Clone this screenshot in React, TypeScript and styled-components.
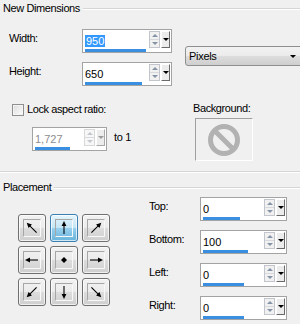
import React from 'react';
import styled, { createGlobalStyle, css } from 'styled-components';

const GlobalStyle = createGlobalStyle`
	html, body {
		margin: 0;
		padding: 0;
		background: #f0f0f0;
	}
	body {
		font-family: "Liberation Sans", Arial, sans-serif;
		font-size: 11px;
		color: #000;
	}
`;

type Dir = 'nw' | 'n' | 'ne' | 'w' | 'c' | 'e' | 'sw' | 's' | 'se';

const ROTATE: Record<Dir, number> = { n: 0, ne: 45, e: 90, se: 135, s: 180, sw: 225, w: 270, nw: 315, c: 0 };

const ArrowIcon: React.FC<{ dir: Dir }> = ({ dir }) => {
	if (dir === 'c') {
		return (
			<svg width="16" height="16" viewBox="0 0 16 16">
				<polygon points="8,5 11,8 8,11 5,8" fill="#000" />
			</svg>
		);
	}
	const diagonal = dir.length === 2;
	const len = diagonal ? 6.5 : 6;
	return (
		<svg width="16" height="16" viewBox="0 0 16 16">
			<g transform={`rotate(${ROTATE[dir]} 8 8)`}>
				<line x1="8" y1={8 - len + 2} x2="8" y2={8 + len} stroke="#000" strokeWidth="1.1" />
				<polygon points={`8,${8 - len - 1} 5.6,${8 - len + 4} 10.4,${8 - len + 4}`} fill="#000" />
			</g>
		</svg>
	);
};

const NoSign: React.FC = () => (
	<svg width="34" height="34" viewBox="0 0 34 34">
		<circle cx="17" cy="17" r="13.5" fill="none" stroke="#b2b2b2" strokeWidth="5" />
		<line x1="7.5" y1="7.5" x2="26.5" y2="26.5" stroke="#b2b2b2" strokeWidth="5" />
	</svg>
);

const SpinField: React.FC<{
	value: string;
	fill: number;
	width: number;
	selected?: boolean;
	disabled?: boolean;
}> = ({ value, fill, width, selected, disabled }) => (
	<Field $width={width}>
		<FieldTop>
			<Value $disabled={disabled}>{selected ? <Selection>{value}</Selection> : value}</Value>
			<Spinner>
				<UpDown $disabled={disabled}>
					<Half>
						<TriUp $disabled={disabled} />
					</Half>
					<Half $lower>
						<TriDown $disabled={disabled} />
					</Half>
				</UpDown>
				<DropBtn $disabled={disabled}>
					<TriDrop $disabled={disabled} />
				</DropBtn>
			</Spinner>
		</FieldTop>
		<Track>
			<Bar style={{ width: fill }} />
		</Track>
	</Field>
);

const PLACEMENT: Dir[] = ['nw', 'n', 'ne', 'w', 'c', 'e', 'sw', 's', 'se'];

const App: React.FC = () => {
	return (
		<>
			<GlobalStyle />
			<Page>
				<GroupHeader>
					<GroupTitle>New Dimensions</GroupTitle>
					<GroupRule />
				</GroupHeader>

				<DimRow>
					<FieldGrid $labelWidth={73} $fieldWidth={90}>
						<FieldLabel>Width:</FieldLabel>
						<SpinField value="950" fill={61} width={90} selected />
						<FieldLabel>Height:</FieldLabel>
						<SpinField value="650" fill={57} width={90} />
					</FieldGrid>
					<UnitSelect>
						<span>Pixels</span>
						<TriDrop />
					</UnitSelect>
				</DimRow>

				<OptionRow>
					<OptionLeft>
						<LockRow>
							<CheckBox />
							<LabelText>Lock aspect ratio:</LabelText>
						</LockRow>
						<RatioRow>
							<SpinField value="1,727" fill={35} width={75} disabled />
							<RatioText>to 1</RatioText>
						</RatioRow>
					</OptionLeft>
					<OptionRight>
						<LabelText>Background:</LabelText>
						<BgSwatch>
							<NoSign />
						</BgSwatch>
					</OptionRight>
				</OptionRow>

				<Separator />

				<GroupHeader>
					<GroupTitle>Placement</GroupTitle>
					<GroupRule />
				</GroupHeader>

				<PlacementRow>
					<PosGrid>
						{PLACEMENT.map((d) => (
							<PosButton key={d} $active={d === 'n'}>
								<PosFrame>
									<ArrowIcon dir={d} />
								</PosFrame>
							</PosButton>
						))}
					</PosGrid>
					<FieldGrid $labelWidth={51} $fieldWidth={87}>
						<FieldLabel>Top:</FieldLabel>
						<SpinField value="0" fill={37} width={87} />
						<FieldLabel>Bottom:</FieldLabel>
						<SpinField value="100" fill={45} width={87} />
						<FieldLabel>Left:</FieldLabel>
						<SpinField value="0" fill={41} width={87} />
						<FieldLabel>Right:</FieldLabel>
						<SpinField value="0" fill={41} width={87} />
					</FieldGrid>
				</PlacementRow>
			</Page>
		</>
	);
};

const Page = styled.div`
	width: 300px;
	height: 324px;
	overflow: hidden;
	box-sizing: border-box;
	padding-top: 2px;
`;

const GroupHeader = styled.div`
	display: flex;
	align-items: center;
	height: 13px;
	line-height: 13px;
	padding-left: 3px;
`;

const GroupTitle = styled.span`
	letter-spacing: -0.4px;
	margin-right: 3px;
	white-space: nowrap;
`;

const GroupRule = styled.div`
	flex: 1;
	height: 0;
	border-top: 1px solid #d5d5d5;
	border-bottom: 1px solid #ffffff;
`;

const Separator = styled.div`
	margin-top: 10px;
	height: 0;
	border-top: 1px solid #d5d5d5;
	border-bottom: 1px solid #ffffff;
	margin-bottom: 8px;
`;

const DimRow = styled.div`
	display: flex;
	align-items: center;
	margin-top: 14px;
	padding-left: 9px;
`;

const FieldGrid = styled.div<{ $labelWidth: number; $fieldWidth: number }>`
	display: grid;
	grid-template-columns: ${(p) => p.$labelWidth}px ${(p) => p.$fieldWidth}px;
	row-gap: 9px;
	align-items: start;
	flex-shrink: 0;
`;

const FieldLabel = styled.div`
	line-height: 13px;
	padding-top: 3px;
	letter-spacing: -0.4px;
`;

const LabelText = styled.span`
	line-height: 13px;
	letter-spacing: -0.4px;
	white-space: nowrap;
`;

const Field = styled.div<{ $width: number }>`
	width: ${(p) => p.$width}px;
	height: 24px;
	box-sizing: border-box;
	border: 1px solid #a3a3a3;
	background: #ffffff;
	padding: 1px 1px 0 2px;
	display: flex;
	flex-direction: column;
`;

const FieldTop = styled.div`
	display: flex;
	align-items: flex-start;
	height: 17px;
`;

const Value = styled.div<{ $disabled?: boolean }>`
	flex: 1;
	padding-top: 4px;
	line-height: 13px;
	color: ${(p) => (p.$disabled ? '#8d8d8d' : '#000')};
`;

const Selection = styled.span`
	background: #3399ff;
	color: #ffffff;
	padding: 0 1px 0 1px;
	margin-left: 0px;
`;

const Spinner = styled.div`
	display: flex;
	gap: 1px;
	height: 17px;
`;

const UpDown = styled.div<{ $disabled?: boolean }>`
	width: 11px;
	height: 17px;
	box-sizing: border-box;
	border: 1px solid ${(p) => (p.$disabled ? '#d8d8d8' : '#c2c6cc')};
	background: ${(p) => (p.$disabled ? '#f7f7f7' : '#f1f1f1')};
	display: flex;
	flex-direction: column;
`;

const Half = styled.div<{ $lower?: boolean }>`
	flex: 1;
	display: flex;
	align-items: center;
	justify-content: center;
	${(p) =>
		p.$lower &&
		css`
			border-top: 1px solid #d6d9dd;
		`}
`;

const TriUp = styled.span<{ $disabled?: boolean }>`
	width: 0;
	height: 0;
	border-left: 3px solid transparent;
	border-right: 3px solid transparent;
	border-bottom: 3px solid ${(p) => (p.$disabled ? '#c4c8ce' : '#8593a6')};
`;

const TriDown = styled.span<{ $disabled?: boolean }>`
	width: 0;
	height: 0;
	border-left: 3px solid transparent;
	border-right: 3px solid transparent;
	border-top: 3px solid ${(p) => (p.$disabled ? '#c4c8ce' : '#8593a6')};
`;

const DropBtn = styled.div<{ $disabled?: boolean }>`
	width: 9px;
	height: 17px;
	box-sizing: border-box;
	border: 1px solid;
	border-color: #ffffff ${(p) => (p.$disabled ? '#a8a8a8' : '#6a6a6a')}
		${(p) => (p.$disabled ? '#a8a8a8' : '#6a6a6a')} #ffffff;
	background: #ececec;
	display: flex;
	align-items: center;
	justify-content: center;
`;

const TriDrop = styled.span<{ $disabled?: boolean }>`
	width: 0;
	height: 0;
	border-left: 3px solid transparent;
	border-right: 3px solid transparent;
	border-top: 3px solid ${(p) => (p.$disabled ? '#9a9a9a' : '#000')};
`;

const Track = styled.div`
	margin-top: 1px;
	height: 3px;
`;

const Bar = styled.div`
	height: 3px;
	background: #3b8fe0;
`;

const UnitSelect = styled.div`
	margin-left: 13px;
	margin-bottom: 3px;
	width: 118px;
	height: 20px;
	flex-shrink: 0;
	box-sizing: border-box;
	display: flex;
	align-items: center;
	justify-content: space-between;
	padding: 0 6px 0 3px;
	border: 1px solid #8e8f8f;
	border-radius: 3px;
	background: linear-gradient(#f2f2f2, #ebebeb 50%, #dddddd 50%, #cfcfcf);
	letter-spacing: -0.3px;
`;

const OptionRow = styled.div`
	display: flex;
	align-items: flex-start;
	margin-top: 16px;
`;

const OptionLeft = styled.div`
	width: 181px;
	box-sizing: border-box;
	padding: 1px 0 0 12px;
	flex-shrink: 0;
`;

const LockRow = styled.div`
	display: flex;
	align-items: center;
	gap: 3px;
`;

const CheckBox = styled.span`
	width: 12px;
	height: 12px;
	box-sizing: border-box;
	border: 1px solid #8f8f8f;
	background: linear-gradient(135deg, #dcdcdc, #fdfdfd);
	box-shadow: inset 0 0 0 1px #f4f4f4;
`;

const RatioRow = styled.div`
	display: flex;
	align-items: flex-start;
	margin: 11px 0 0 20px;
`;

const RatioText = styled.span`
	margin-left: 7px;
	padding-top: 4px;
	line-height: 13px;
	letter-spacing: -0.3px;
`;

const OptionRight = styled.div`
	display: flex;
	flex-direction: column;
	align-items: flex-start;
	padding-left: 12px;
`;

const BgSwatch = styled.div`
	margin: 3px 0 0 2px;
	width: 58px;
	height: 43px;
	box-sizing: border-box;
	border: 1px solid;
	border-color: #a0a0a0 #ffffff #ffffff #a0a0a0;
	display: flex;
	align-items: center;
	justify-content: center;
`;

const PlacementRow = styled.div`
	display: flex;
	align-items: flex-start;
	margin-top: 3px;
	padding-left: 18px;
	gap: 39px;
`;

const PosGrid = styled.div`
	margin-top: 17px;
	display: grid;
	grid-template-columns: repeat(3, 28px);
	grid-auto-rows: 28px;
	gap: 4px;
`;

const PosButton = styled.div<{ $active?: boolean }>`
	box-sizing: border-box;
	border: 1px solid ${(p) => (p.$active ? '#3c7fb1' : '#707070')};
	border-radius: 3px;
	background: ${(p) =>
		p.$active
			? 'linear-gradient(#e5f4fc, #c4e5f6 50%, #98d1ef 50%, #68b3db)'
			: 'linear-gradient(#f2f2f2, #ebebeb 50%, #dddddd 50%, #cfcfcf)'};
	box-shadow: inset 0 0 0 1px rgba(255, 255, 255, 0.7);
	display: flex;
	align-items: center;
	justify-content: center;
`;

const PosFrame = styled.div`
	width: 18px;
	height: 18px;
	box-sizing: border-box;
	border: 1px solid;
	border-color: #a6a6a6 #f8f8f8 #f8f8f8 #a6a6a6;
	display: flex;
	align-items: center;
	justify-content: center;
`;

export default App;
